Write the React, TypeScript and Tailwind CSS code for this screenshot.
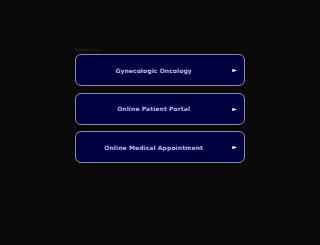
import React from 'react';

const links = ['Gynecologic Oncology', 'Online Patient Portal', 'Online Medical Appointment'];

export default function App() {
  return (
    <div className="min-h-[245px] w-full bg-[#0a0a0a] pt-[48px] font-['DejaVu_Sans',sans-serif]">
      <div className="mx-auto w-[170px]">
        <div className="h-[6px] text-[3.5px] leading-[4px] text-[#333]">Related Links</div>
        <div className="flex flex-col gap-[6.5px]">
          {links.map((label) => (
            <a
              key={label}
              href="#"
              className="flex h-[32px] items-center rounded-[6px] border border-[#8a8aa8] bg-[#00003f] pl-[10px] pr-[7px] text-[6px] font-bold tracking-[0.1px] text-[#b4b8f0] antialiased"
            >
              <span className="flex-1 text-center">{label}</span>
              <span className="ml-[11px] text-[6px] leading-none text-white">►</span>
            </a>
          ))}
        </div>
      </div>
    </div>
  );
}
